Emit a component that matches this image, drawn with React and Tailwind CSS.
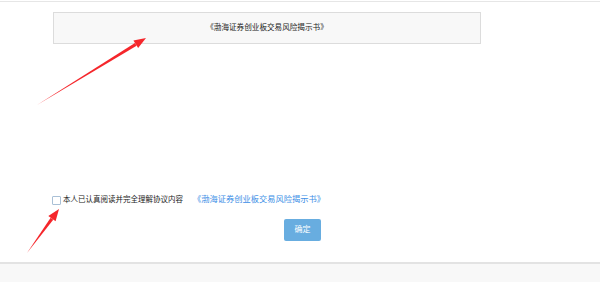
import React from 'react';

const font = { fontFamily: '"Liberation Sans", "Noto Sans CJK SC", sans-serif' };

const Arrow = ({ x1, y1, x2, y2 }) => {
  const dx = x2 - x1;
  const dy = y2 - y1;
  const len = Math.sqrt(dx * dx + dy * dy);
  const ux = dx / len;
  const uy = dy / len;
  const px = -uy;
  const py = ux;
  const hl = 12;
  const hw = 4.5;
  const bx = x2 - ux * hl;
  const by = y2 - uy * hl;
  const shaft = `${x1},${y1} ${bx + px * 1.6},${by + py * 1.6} ${bx - px * 1.6},${by - py * 1.6}`;
  const head = `${x2},${y2} ${bx + px * hw},${by + py * hw} ${bx - px * hw},${by - py * hw}`;
  return (
    <g fill="#f5262b">
      <polygon points={shaft} />
      <polygon points={head} />
    </g>
  );
};

export default function App() {
  return (
    <div className="relative w-[600px] h-[282px] bg-white flex flex-col overflow-hidden" style={font}>
      <div className="h-[2px] border-b border-[#e6e6e6]" />

      <div className="mt-[10px] ml-[53px] w-[428px] h-[32px] bg-[#f8f8f8] border border-[#dcdcdc] flex items-center justify-center">
        <span className="text-[7.6px] text-[#222]">《渤海证券创业板交易风险揭示书》</span>
      </div>

      <div className="flex-1" />

      <div className="ml-[52px] flex items-center h-[10px]">
        <span className="w-[9px] h-[9px] border border-[#a9c0d6] rounded-[1px] bg-white" />
        <span className="ml-[2px] text-[7.5px] text-[#222]">本人已认真阅读并完全理解协议内容</span>
        <span className="ml-[10px] text-[8.25px] text-[#3a8ee6]">《渤海证券创业板交易风险揭示书》</span>
      </div>

      <div className="mt-[10px] ml-[284px]">
        <button className="w-[37px] h-[22px] rounded-[2px] bg-[#68ade0] text-white text-[8px]">确定</button>
      </div>

      <div className="mt-[21px] h-[20px] border-t-2 border-[#e3e3e3] bg-[#f8f8f8]" />

      <svg className="absolute inset-0 pointer-events-none" width="600" height="282">
        <Arrow x1={37} y1={105} x2={146} y2={38} />
        <Arrow x1={27} y1={253} x2={59} y2={209} />
      </svg>
    </div>
  );
}
